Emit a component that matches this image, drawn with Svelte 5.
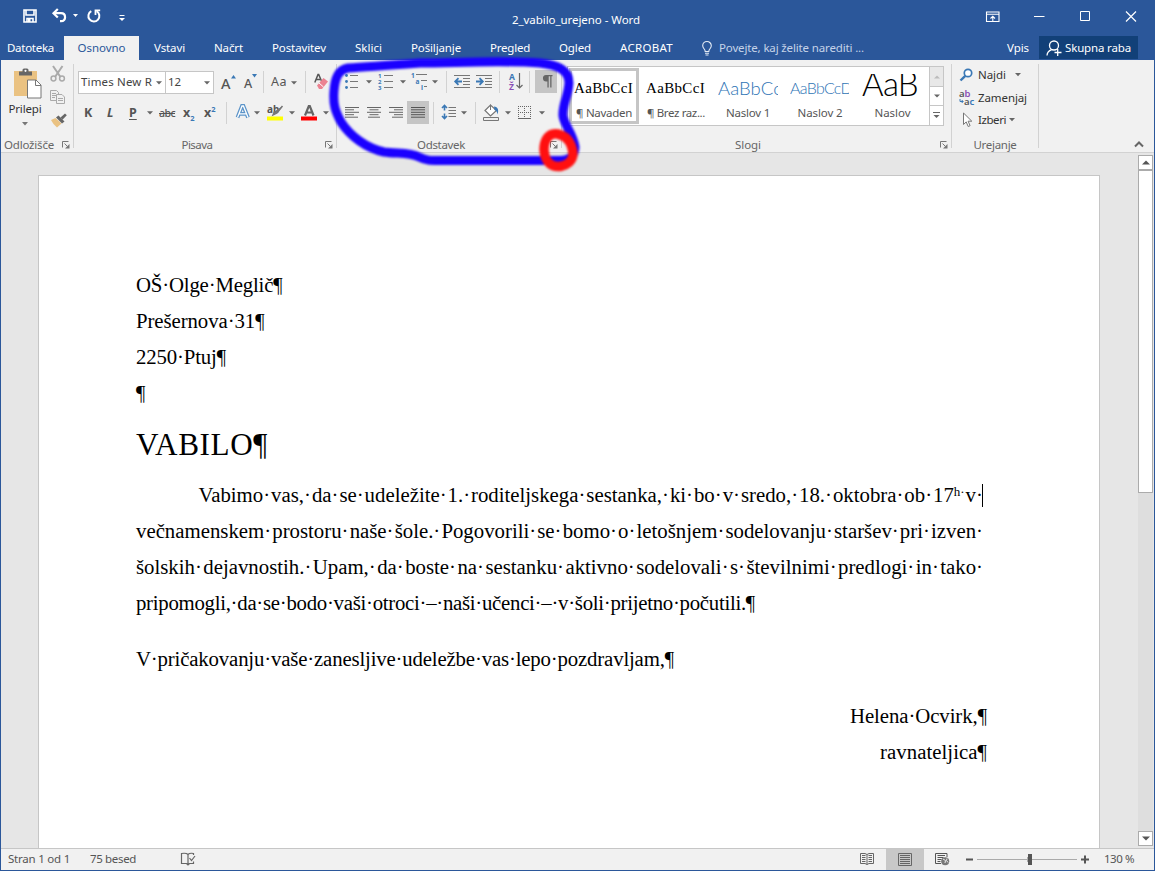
<script>
  const tabs = [
    ['Datoteka', 47], ['Osnovno', 48], ['Vstavi', 31], ['Načrt', 29], ['Postavitev', 54],
    ['Sklici', 27], ['Pošiljanje', 50], ['Pregled', 40], ['Ogled', 32], ['ACROBAT', 53]
  ];

  const styles = [
    { sample: 'AaBbCcI', label: '¶ Navaden', w: 56, sw: 59, kind: 'serif', selected: true },
    { sample: 'AaBbCcI', label: '¶ Brez raz...', w: 58, sw: 59, kind: 'serif' },
    { sample: 'AaBbCc', label: 'Naslov 1', w: 44, sw: 64, kind: 'h1' },
    { sample: 'AaBbCcD', label: 'Naslov 2', w: 45, sw: 62, kind: 'h2' },
    { sample: 'AaB', label: 'Naslov', w: 36, sw: 56, kind: 'title' }
  ];

  const address = [['OŠ·Olge·Meglič¶', 146.5], ['Prešernova·31¶', 128.5], ['2250·Ptuj¶', 90], ['¶', 0]];

  const justified = [
    'večnamenskem prostoru naše šole. Pogovorili se bomo o letošnjem sodelovanju staršev pri izven',
    'šolskih dejavnostih. Upam, da boste na sestanku aktivno sodelovali s številnimi predlogi in tako'
  ];
  const firstLine = 'Vabimo vas, da se udeležite 1. roditeljskega sestanka, ki bo v sredo, 18. oktobra ob';

  // Spreads the letters of a label so that it takes the given width.
  function fit(node, width) {
    if (!width) return;
    const apply = () => {
      node.style.letterSpacing = '0px';
      const natural = node.getBoundingClientRect().width;
      const count = [...node.textContent].length;
      node.style.letterSpacing = (width - natural) / count + 'px';
    };
    apply();
    document.fonts?.ready.then(apply);
  }
</script>

{#snippet arrow()}
  <svg class="ic" width="6" height="23"><path d="M0 10.3h6L3 13.5z" fill="#666" /></svg>
{/snippet}

{#snippet launcher()}
  <svg class="launch" width="8" height="8" viewBox="0 0 8 8"><path d="M.5 6.500V.5H6.500M2.500 2.500l3 3" fill="none" stroke="#777" /><path d="M7.500 3v4.500H3z" fill="#777" /></svg>
{/snippet}

{#snippet rule()}<i class="rule"></i>{/snippet}

{#snippet spread(text)}
  {#each text.split(' ') as word}<span>{word}·</span>{/each}
{/snippet}

<div class="window">
  <header>
    <div class="titlebar">
      <div class="quick">
        <svg width="14" height="14" viewBox="0 0 14 14"><path d="M1 1h12v12H1zM3 1v5h8V1M4 13V9.5h6V13" fill="none" stroke="#fff" stroke-width="1.6" /><path d="M5 10h2.5v3H5z" fill="#fff" /></svg>
        <svg width="15" height="14" viewBox="0 0 15 14"><path d="M2 4.2h7c5.400 0 5.400 8 .2 8H8" fill="none" stroke="#fff" stroke-width="2.200" /><path d="M5.800 0L1.500 4.200l4.300 4.300" fill="none" stroke="#fff" stroke-width="2.200" /></svg>
        <svg width="5" height="14"><path d="M0 5h5L2.500 8z" fill="#fff" /></svg>
        <svg width="14" height="14" viewBox="0 0 14 14"><path d="M4.300 2.100A5.500 5.500 0 1 0 9.600 2.200" fill="none" stroke="#fff" stroke-width="2" /><path d="M8.500 6V1.300H13.200" fill="none" stroke="#fff" stroke-width="1.800" /></svg>
        <svg width="6" height="14"><path d="M.5 6.500h5" stroke="#fff" /><path d="M0 9h6L3 12z" fill="#fff" /></svg>
      </div>
      <div class="doctitle"><span use:fit={128}>2_vabilo_urejeno - Word</span></div>
      <div class="controls">
        <svg width="14" height="12" viewBox="0 0 14 12"><path d="M.5 1h12.500v9.500H.5zM.5 3.300H13M6.800 10V5.500M4.500 7.500l2.300-2.200L9 7.500" fill="none" stroke="#fff" stroke-width="1.100" /></svg>
        <svg width="11" height="12"><path d="M0 5.500h10.500" stroke="#fff" /></svg>
        <svg width="11" height="12"><path d="M1.500 .5h9v9h-9z" fill="none" stroke="#fff" /></svg>
        <svg width="11" height="12"><path d="M0 .5l10 10M10 .5l-10 10" stroke="#fff" stroke-width="1.200" /></svg>
      </div>
    </div>
    <nav>
      {#each tabs as [name, w], i}
        <div class="tab" class:active={i === 1}><span use:fit={w}>{name}</span></div>
      {/each}
      <div class="tell">
        <svg width="10" height="15" viewBox="0 0 10 15"><path d="M3.200 10.500C3.200 8 .7 7.500.7 4.800a4.300 4.300 0 0 1 8.600 0C9.300 7.500 6.800 8 6.800 10.500zM3 12.200h4M3.500 14h3" fill="none" stroke="#e4ebf5" stroke-width="1.100" /></svg>
        <span use:fit={145}>Povejte, kaj želite narediti ...</span>
      </div>
      <div class="login"><span use:fit={22}>Vpis</span></div>
      <div class="share">
        <svg width="16" height="16" viewBox="0 0 16 16"><circle cx="8" cy="5.500" r="4.500" fill="none" stroke="#fff" stroke-width="1.300" /><path d="M1 15.500c.2-3 2-4.800 4.600-5.800M8.500 12.500h7M11.700 9v7" fill="none" stroke="#fff" stroke-width="1.300" /></svg>
        <span use:fit={66}>Skupna raba</span>
      </div>
    </nav>
  </header>

  <div class="ribbon">
    <section class="group clipboard">
      <div class="clip">
        <div class="paste">
          <svg width="30" height="32" viewBox="0 0 30 32">
            <path d="M1 3h23v25H1z" fill="#eac282" />
            <path d="M6 3.500h3.500V2a1.500 1.500 0 0 1 1.500-1.500h3A1.500 1.500 0 0 1 15.500 2v1.500H19v4H6z" fill="#666" /><circle cx="12.500" cy="2.800" r="1.100" fill="#fff" />
            <path d="M14.500 12h8.500l5 5v13H14.500z" fill="#fff" stroke="#777" /><path d="M22.500 12v5.500h5.500" fill="none" stroke="#777" />
          </svg>
          <span use:fit={33}>Prilepi</span>
          <svg width="6" height="4"><path d="M0 0h6L3 3.500z" fill="#777" /></svg>
        </div>
        <div class="clipside">
          <svg width="16" height="16" viewBox="0 0 16 16" fill="none" stroke="#aaa" stroke-width="1.500"><path d="M3 0l7.500 11M12.500 0L5 11" stroke-width="2" /><circle cx="3.500" cy="12.500" r="2.400" /><circle cx="12" cy="12.500" r="2.400" /></svg>
          <svg width="16" height="16" viewBox="0 0 16 16" fill="#f1f1f1" stroke="#aaa"><path d="M.5 1.500h6l2 2v8h-8zM2 4.500h4M2 6.500h4M2 8.500h3" /><path d="M6.500 5.500h5.500l2.500 2.500v6.500h-8zM8 9.500h5M8 11.500h5" /></svg>
          <svg width="18" height="16" viewBox="0 0 18 16"><path d="M1 8l4.500-2 6 5.500L7 15.500 3.500 12z" fill="#eac282" /><path d="M6 5.500l2.500-2 6 6-2.500 2z" fill="#666" /><path d="M10.500 5.500l4.500-4 1.800 1.800-4.300 4.500z" fill="#666" /></svg>
        </div>
      </div>
      <div class="caption"><span use:fit={50}>Odložišče</span>{@render launcher()}</div>
    </section>

    <section class="group font">
      <div class="row r1">
        <div class="combo"><span use:fit={71}>Times New R</span>{@render arrow()}</div>
        <div class="combo size"><span use:fit={13}>12</span>{@render arrow()}</div>
        <div class="glyph grow">A<svg width="5" height="4"><path d="M0 3.500L2.500 0 5 3.500z" fill="#3a78b5" /></svg></div>
        <div class="glyph shrink">A<svg width="5" height="4"><path d="M0 0h5L2.500 3.500z" fill="#3a78b5" /></svg></div>
        {@render rule()}
        <div class="glyph case"><span use:fit={16}>Aa</span></div>
        {@render arrow()}
        {@render rule()}
        <svg class="ic" width="16" height="23" viewBox="0 0 16 23"><path d="M.8 11.500L4 3.500h.7l3 7M2 8.500h4" fill="none" stroke="#555" stroke-width="1.500" /><path d="M3 14.500l6.500-7.500 4.500 3.500-6 7.500H5z" fill="#ec8291" /><path d="M5 12l4.500 4" stroke="#fff" /></svg>
      </div>
      <div class="row r2">
        <div class="glyph b">K</div>
        <div class="glyph b it">L</div>
        <div class="glyph b un">P</div>
        {@render arrow()}
        <div class="glyph strike"><span use:fit={16}>abc</span></div>
        <div class="glyph b">x<sub>2</sub></div>
        <div class="glyph b">x<sup>2</sup></div>
        {@render rule()}
        <svg class="ic" width="14" height="23" viewBox="0 0 14 23"><path d="M1.500 16.500L6 5h1.400l4.600 11.500M3.500 12.800h6.500" fill="none" stroke="#5c94c9" stroke-width="3.800" /><path d="M1.500 16.500L6 5h1.400l4.600 11.500M3.500 12.800h6.500" fill="none" stroke="#fff" stroke-width="1.300" /></svg>
        {@render arrow()}
        <svg class="ic" width="17" height="23" viewBox="0 0 17 23"><text x="0" y="12" font-size="10" font-weight="700" fill="#555">ab</text><path d="M15.500 5l-5.500 7-4 2 1.500-3.500" fill="#777" stroke="#777" stroke-width="1.500" /><path d="M0 15.500h16v4H0z" fill="#ff0" /></svg>
        {@render arrow()}
        <svg class="ic" width="17" height="23" viewBox="0 0 17 23"><path d="M4 14.500L7.800 5h1L12.500 14.500M5.300 11.500h6" fill="none" stroke="#666" stroke-width="2.200" /><path d="M0 15.500h16v4H0z" fill="red" /></svg>
        {@render arrow()}
      </div>
      <div class="caption"><span use:fit={31}>Pisava</span>{@render launcher()}</div>
    </section>

    <section class="group para">
      <div class="row r1">
        <svg class="ic" width="15" height="23"><g fill="#3a78b5"><circle cx="1.500" cy="5.500" r="1.400" /><circle cx="1.500" cy="11.500" r="1.400" /><circle cx="1.500" cy="17.500" r="1.400" /></g><path d="M5 5.500h8M5 11.500h8M5 17.500h8" stroke="#777" /></svg>
        {@render arrow()}
        <svg class="ic" width="16" height="23"><g fill="#3a78b5" font-size="6" font-weight="700"><text x="0" y="7.500">1</text><text x="0" y="13.700">2</text><text x="0" y="19.900">3</text></g><path d="M6 5.500h9M6 11.500h9M6 17.500h9" stroke="#777" /></svg>
        {@render arrow()}
        <svg class="ic" width="18" height="23"><g fill="#3a78b5" font-size="6.500" font-weight="700"><text x="0" y="7.500">1</text><text x="4.500" y="13.500">a</text><text x="10" y="19.500">i</text></g><path d="M5 4.500h11M10 10.500h6M13 16.500h3" stroke="#777" /></svg>
        {@render arrow()}
        {@render rule()}
        <svg class="ic" width="17" height="23"><path d="M0 5.500h16M9 8.500h7M9 11.500h7M9 14.500h7M0 17.500h16" stroke="#777" /><path d="M8 11.500H1.500M4.500 8.200L1.200 11.500l3.300 3.300" fill="none" stroke="#3a78b5" stroke-width="1.800" /></svg>
        <svg class="ic" width="17" height="23"><path d="M0 5.500h16M9 8.500h7M9 11.500h7M9 14.500h7M0 17.500h16" stroke="#777" /><path d="M0 11.500h6.500M3.500 8.200l3.300 3.300-3.300 3.300" fill="none" stroke="#3a78b5" stroke-width="1.800" /></svg>
        {@render rule()}
        <svg class="ic" width="16" height="23"><text x="1" y="10" font-size="8.500" font-weight="700" fill="#3a78b5">A</text><text x="1" y="19.500" font-size="8.500" font-weight="700" fill="#8a4fb5">Ž</text><path d="M11.500 3v15M8.500 15l3 3 3-3" fill="none" stroke="#666" stroke-width="1.200" /></svg>
        {@render rule()}
        <div class="pressed"><svg width="22" height="23"><path d="M11 5h6.500v1.200h-1V17.500h-1.300V6.200h-1.500V17.500h-1.300V11.500h-1A3.200 3.200 0 0 1 11 5z" fill="#666" /></svg></div>
      </div>
      <div class="row r2">
        <svg class="ic" width="15" height="22"><path d="M0 6.500h14M0 8.800h9M0 11.300h14M0 13.700h9M0 16.200h13" stroke="#666" /></svg>
        <svg class="ic" width="15" height="22"><path d="M0 6.500h14M2.500 8.800h9M0 11.300h14M2.500 13.700h9M1 16.200h12" stroke="#666" /></svg>
        <svg class="ic" width="15" height="22"><path d="M0 6.500h14M5 8.800h9M0 11.300h14M5 13.700h9M3 16.200h11" stroke="#666" /></svg>
        <div class="pressed"><svg width="22" height="22"><path d="M4 6.500h14M4 8.800h14M4 11.300h14M4 13.700h14M4 16.200h14" stroke="#555" /></svg></div>
        {@render rule()}
        <svg class="ic" width="15" height="22"><path d="M6.500 6.500h7.500M6.500 9.500h7.500M6.500 12.500h7.500M6.500 15.500h7.500" stroke="#777" /><path d="M2.500 4.500v5M2.500 12.500v5M0 7l2.500-2.500L5 7M0 15l2.500 2.500L5 15" fill="none" stroke="#3a78b5" stroke-width="1.600" /></svg>
        {@render arrow()}
        {@render rule()}
        <svg class="ic" width="17" height="22"><path d="M2 9.500L7.500 4l6 5.500-6 5.500z" fill="#fff" stroke="#777" stroke-width="1.200" /><path d="M7.500 9V3.500" stroke="#777" /><path d="M11 5.500c4 .5 5 3.500 3.500 8-.5-3-1.500-4-3-4.500z" fill="#3a78b5" /><path d="M.5 16.500h15v3H.5z" fill="#eee" stroke="#777" /></svg>
        {@render arrow()}
        <svg class="ic" width="15" height="22"><path d="M.5 5v13M6.500 5v13M12.500 5v13M0 5.500h13M0 11.500h13" fill="none" stroke="#666" stroke-dasharray="1 1" /><path d="M0 17.500h13" stroke="#666" /></svg>
        {@render arrow()}
      </div>
      <div class="caption"><span use:fit={48}>Odstavek</span>{@render launcher()}</div>
    </section>

    <section class="group styles">
      <div class="gallery">
        {#each styles as s}
          <div class="style" class:selected={s.selected}>
            <div class="sample {s.kind}"><span use:fit={s.sw}>{s.sample}</span></div>
            <div class="name"><span use:fit={s.w}>{s.label}</span></div>
          </div>
        {/each}
        <div class="pager">
          <div class="off"><svg width="6" height="4"><path d="M0 3.500L3 .5l3 3z" fill="#bbb" /></svg></div>
          <div><svg width="6" height="4"><path d="M0 .5h6l-3 3z" fill="#666" /></svg></div>
          <div><svg width="7" height="7"><path d="M0 .5h7" stroke="#666" /><path d="M.5 3h6l-3 3z" fill="#666" /></svg></div>
        </div>
      </div>
      <div class="caption"><span use:fit={26}>Slogi</span>{@render launcher()}</div>
    </section>

    <section class="group edit">
      <div class="cmds">
        <div>
          <svg width="19" height="14" viewBox="0 0 19 14"><circle cx="9" cy="5" r="3.700" fill="#fff" stroke="#3a78b5" stroke-width="1.700" /><path d="M6.300 7.800L1.500 12.500" stroke="#3a78b5" stroke-width="2.400" /></svg>
          <span use:fit={28}>Najdi</span><svg class="late" width="6" height="4"><path d="M0 0h6L3 3.300z" fill="#666" /></svg>
        </div>
        <div>
          <svg width="19" height="17" viewBox="0 0 19 17" font-size="9.500" font-weight="600"><text x="0" y="7.500" fill="#555">a<tspan fill="#8a4fb5">b</tspan></text><text x="5" y="15.500" fill="#555">a<tspan fill="#3a78b5">c</tspan></text><path d="M1 10v2.500h3M2.700 11l1.500 1.500L2.700 14" fill="none" stroke="#3a78b5" /></svg>
          <span use:fit={49}>Zamenjaj</span>
        </div>
        <div>
          <svg width="19" height="16" viewBox="0 0 19 16"><path d="M4.500 1v11.500l2.700-2.600 2 4.600 1.900-.8-2-4.500h3.700z" fill="#fff" stroke="#777" /></svg>
          <span use:fit={28}>Izberi</span><svg class="soon" width="6" height="4"><path d="M0 0h6L3 3.300z" fill="#666" /></svg>
        </div>
      </div>
      <div class="caption"><span use:fit={43}>Urejanje</span></div>
    </section>
    <div class="collapse"><svg width="10" height="7"><path d="M1 5.500l4-4 4 4" fill="none" stroke="#666" stroke-width="2" /></svg></div>
  </div>

  <main>
    <article>
      {#each address as [line, w]}<p><span use:fit={w}>{line}</span></p>{/each}
      <h1><span use:fit={132}>VABILO¶</span></h1>
      <p class="just first">{@render spread(firstLine)}<span>17<sup class="h">h·</sup></span><span>v·</span><i class="caret"></i></p>
      {#each justified as line}<p class="just">{@render spread(line)}</p>{/each}
      <p><span use:fit={619}>pripomogli,·da·se·bodo·vaši·otroci·–·naši·učenci·–·v·šoli·prijetno·počutili.¶</span></p>
      <p class="closing"><span use:fit={538}>V·pričakovanju·vaše·zanesljive·udeležbe·vas·lepo·pozdravljam,¶</span></p>
      <p class="sign"><span use:fit={137}>Helena·Ocvirk,¶</span></p>
      <p class="sign"><span use:fit={107}>ravnateljica¶</span></p>
    </article>
    <div class="scroll">
      <div class="sbtn"><svg width="8" height="5"><path d="M0 4.500L4 .5l4 4z" fill="#555" /></svg></div>
      <div class="thumb"></div>
      <div class="sbtn end"><svg width="8" height="5"><path d="M0 .5h8l-4 4z" fill="#555" /></svg></div>
    </div>
  </main>

  <footer>
    <span class="pages"><span use:fit={62}>Stran 1 od 1</span></span>
    <span class="words"><span use:fit={46}>75 besed</span></span>
    <svg class="proof" width="15" height="14" viewBox="0 0 15 14"><path d="M7 12.500V2.500C5.500 1 3.500 1 .5 1.500v10h5L7 13l1.500-1.500h4v-2M7 2.500C8.500 1 10 1 12.500 1.500v1.500M8.500 6l2 2.500L14 4" fill="none" stroke="#666" stroke-width="1.200" /></svg>
    <div class="views">
      <div><svg width="14" height="14" viewBox="0 0 14 14"><path d="M.5 1.500H5l2 1 2-1h4.500v10H9l-2 1-2-1H.5zM7 2.500v10M2 3.500h3.500M2 5.500h3.500M2 7.500h3.500M2 9.500h3.500M8.500 3.500H12M8.500 5.500H12M8.500 7.500H12M8.500 9.500H12" fill="none" stroke="#666" /></svg></div>
      <div class="on"><svg width="14" height="13"><path d="M.5.5h13v12H.5zM2 2.500h10M2 4.500h10M2 6.500h10M2 8.500h10M2 10.500h10" fill="none" stroke="#666" /></svg></div>
      <div><svg width="15" height="14" viewBox="0 0 15 14"><path d="M6 11.500H.5V1.500h11.500v3.500M2.500 3.500h7.500M2.500 5.500h6M2.500 7.500h4M2.500 9.500h3" fill="none" stroke="#555" /><circle cx="10.200" cy="9.200" r="4" fill="#777" /><path d="M8 7l2.500 1.500-.5 2.500M12 6.500l-.5 2 1.500 2" fill="none" stroke="#eee" /></svg></div>
    </div>
    <svg class="zoom" width="124" height="14"><path d="M0 7.500h7M115 7.500h8M119 3.500v8" stroke="#555" stroke-width="2" /><path d="M11 7.500h100M61.500 5v5" stroke="#aaa" /><path d="M62 2h4v11h-4z" fill="#555" /></svg>
    <span class="pct"><span use:fit={30}>130 %</span></span>
  </footer>

  <svg class="ink" width="260" height="125" viewBox="325 52 260 125" fill="none" stroke-linecap="round" stroke-linejoin="round">
    <path d="M348 68C338 70 335 78 334 91S335 111 341 122C350 136 366 148 384 152C397 154 409 152 419 157C427 161 431 160.500 444 160.500H559C568 161 575 157 575 147C573 133 564 125 563 116C562 105 568 97 569 83C569 70 558 65 540 63C502 60 454 63 420 63C393 65 366 67 348 68Z" stroke="#1a00ff" stroke-width="9" />
    <path d="M558 134C548 132 544 141 544 150C545 163 552 168 562 166C573 163 575 155 571 145C568 138 564 135 557 134Z" stroke="#ff1010" stroke-width="9.500" />
  </svg>
</div>

<style>
  :global(body) { background: #e6e6e6; }
  .window {
    position: relative; box-sizing: border-box; width: 1155px; height: 871px;
    display: flex; flex-direction: column; overflow: hidden;
    font: 11.5px/16px "Noto Sans", "Open Sans", sans-serif; color: #444;
    background: #e6e6e6; border: solid #2b579a; border-width: 0 1px 1px;
  }
  span { white-space: pre; display: inline-block; flex: none; }
  svg { display: block; flex: none; overflow: visible; }
  svg text { font-family: "Noto Sans", sans-serif; }
  header { height: 60px; background: #2b579a; color: #fff; flex: none; margin: 0 -1px; }
  .titlebar { height: 36px; display: grid; grid-template-columns: 420px 312px 1fr; align-items: center; }
  .quick { display: grid; grid-template-columns: 29px 21px 14px 32px auto; padding: 0 0 4px 23px; }
  .doctitle { display: flex; justify-content: center; padding-top: 3px; }
  .controls { display: grid; grid-template-columns: 48px 45px 47px 11px; justify-content: end; padding: 0 18px 3px 0; }
  nav { height: 24px; display: grid; grid-template-columns: 64px 75px 61px 57px 84px 55px 80px 68px 62px 81px 1fr auto 99px; margin-right: 17px; align-items: stretch; }
  .tab { display: flex; justify-content: center; align-items: center; }
  .tab:first-child { padding-right: 3px; }
  .tab.active { background: #f1f1f1; color: #2b579a; }
  .tell { display: flex; align-items: center; gap: 7px; padding-left: 15px; color: #c5d3e8; }
  .login { display: flex; align-items: center; padding-right: 10px; }
  .share { display: flex; align-items: center; gap: 3px; padding-left: 7px; background: #124078; height: 23px; }

  .ribbon { height: 92px; flex: none; display: flex; background: #f1f1f1; border-bottom: 1px solid #d2d2d2; }
  .group { box-sizing: border-box; display: flex; flex-direction: column; border-right: 1px solid #d2d2d2; margin: 4px 0 4px; position: relative; }
  .clipboard { width: 73px; }
  .font { width: 263px; }
  .para { width: 225px; }
  .styles { width: 390px; }
  .edit { width: 87px; }
  .caption { margin: auto 0 -5px; height: 16px; display: flex; justify-content: center; align-items: center; color: #666; padding-right: 17px; }
  .caption .launch { position: absolute; right: 3px; bottom: -1px; }
  .edit .caption { padding-right: 0; }
  .font .caption { padding-right: 16px; }
  .clipboard .caption { padding-right: 16px; }
  .para .caption { padding-right: 16px; }

  .clip { display: flex; height: 66px; }
  .paste { width: 48px; display: flex; flex-direction: column; align-items: center; padding-top: 4px; color: #333; }
  .paste svg:first-child { margin-left: 6px; }
  .paste span { margin: 1px 0 5px; }
  .clipside { display: flex; flex-direction: column; gap: 7px; padding: 2px 0 0 1px; }

  .row { display: grid; justify-items: start; align-items: center; height: 23px; margin-top: 8px; }
  .r1 { margin-top: 6px; }
  .font .row { padding-left: 4px; }
  .font .r1 { grid-template-columns: 87px 56px 23px 19px 8px 20px 14px 9px 16px; }
  .font .r2 { padding-left: 10px; grid-template-columns: 23px 22px 18px 12px 24px 21px 22px 10px 18px 13px 22px 12px 22px 6px; }
  .para .row { padding-left: 8px; }
  .para .r1 { grid-template-columns: 21px 12px 22px 11px 21px 14px 8px 22px 23px 9px 21px 6px 23px; }
  .para .r2 { grid-template-columns: 22px 22px 18px 26px 9px 19px 14px 8px 22px 13px 21px 6px; }
  .ic { height: 23px; }
  .rule { width: 1px; height: 22px; background: #d2d2d2; }
  .pressed { background: #c5c5c5; height: 23px; width: 22px; }
  .combo { box-sizing: border-box; width: 88px; height: 23px; display: flex; align-items: center; justify-content: space-between; background: #fff; border: 1px solid #c6c6c6; padding: 0 3px 0 2px; }
  .combo.size { width: 49px; }
  .glyph { color: #555; line-height: 20px; white-space: nowrap; }
  .grow, .shrink { display: flex; font-size: 14.5px; font-weight: 500; gap: 0; padding-top: 2px; }
  .shrink { font-size: 12.5px; padding-top: 4px; }
  .grow svg, .shrink svg { margin-top: 2px; }
  .shrink svg { margin-top: 0; }
  .case { font-size: 12.5px; }
  .b { font-weight: 700; font-size: 12.5px; }
  .it { font-style: italic; }
  .un { text-decoration: underline; text-underline-offset: 2px; }
  .strike { font-size: 10.5px; font-weight: 500; }
  .strike span { text-decoration: line-through; }
  .b sub, .b sup { font-size: 7.5px; color: #3a78b5; line-height: 0; }

  .gallery { height: 60px; box-sizing: border-box; margin: 2px 7px 0 5px; display: grid; grid-template-columns: repeat(4, 72px) 73px 1fr; border: 1px solid #c6c6c6; background: #fff; }
  .style { box-sizing: border-box; padding: 4px 6px 0; overflow: hidden; }
  .style.selected { outline: 3px solid #c5c5c5; outline-offset: -4px; }
  .sample { height: 33px; line-height: 34px; overflow: hidden; display: flex; width: 60px; }
  .serif { font-family: "Liberation Serif", serif; font-size: 15px; color: #000; }
  .h1, .h2, .title { font-family: Lato, sans-serif; font-weight: 300; color: #2e74b5; }
  .h1 { font-size: 18.500px; }
  .h2 { font-size: 16px; width: 59px; }
  .title { font-size: 33px; color: #000; line-height: 19px; margin-top: 3px; height: 30px; }
  .name { display: flex; justify-content: center; line-height: 18px; margin: 0 -6px; color: #555; }
  .pager { display: grid; grid-template-rows: 20px 19px 19px; border-left: 1px solid #c6c6c6; }
  .pager div { display: flex; align-items: center; justify-content: center; border-bottom: 1px solid #c6c6c6; }
  .pager div:last-child { border: 0; }
  .pager .off { background: #e8e8e8; }

  .cmds { display: grid; grid-template-rows: 23px 23px 22px; padding-left: 7px; margin-top: -1px; color: #333; }
  .cmds div { display: flex; align-items: center; }
  .cmds .late { margin-left: 9px; }
  .cmds .soon { margin-left: 3px; }
  .collapse { flex: 1; display: flex; justify-content: flex-end; align-items: flex-end; padding: 0 10px 4px 0; }

  main { flex: 1; display: flex; justify-content: space-between; min-height: 0; }
  article { box-sizing: border-box; width: 1062px; margin: 22px 0 0 37px; padding: 91px 121px 0 97px; border: 1px solid #c6c6c6; border-bottom: 0; background: #fff; color: #000; font: 20.8px/36px "Liberation Serif", serif; }
  p, h1 { margin: 0; height: 36px; display: flex; }
  h1 { font-size: 31.200px; font-weight: 400; line-height: 54px; height: 54px; margin: 7px 0 5px; }
  .just { justify-content: space-between; width: 847px; box-sizing: border-box; }
  .first { padding-left: 62.500px; position: relative; }
  .h { font-size: 13px; line-height: 0; vertical-align: 6px; }
  .caret { position: absolute; right: 0; top: 7px; width: 1px; height: 23px; background: #000; }
  .closing { margin-top: 20px; }
  .sign { justify-content: flex-end; margin-right: -9px; }
  .closing + .sign { margin-top: 21px; }
  .scroll { width: 15px; display: flex; flex-direction: column; background: #dedede; margin: 2px 1px 2px 0; }
  .sbtn, .thumb { box-sizing: border-box; border: 1px solid #ababab; background: #fff; }
  .sbtn { height: 15px; display: flex; align-items: center; justify-content: center; }
  .thumb { height: 323px; }
  .end { margin-top: auto; }

  footer { height: 21px; flex: none; display: flex; align-items: center; background: #f1f1f1; border-top: 1px solid #c6c6c6; color: #555; }
  .pages { margin: 0 0 1px 7px; }
  .words { margin: 0 0 2px 20px; }
  .proof { margin: 0 0 2px 45px; }
  .views { margin-left: auto; display: flex; height: 21px; }
  .views div { box-sizing: border-box; width: 38px; display: flex; align-items: center; justify-content: center; padding: 0 1px 1px 0; }
  .views .on { background: #c8c8c8; }
  .zoom { margin: 0 0 1px 4px; }
  .pct { margin: 0 20px 2px 14px; }
  .ink { position: absolute; left: 324px; top: 52px; filter: blur(0.8px); pointer-events: none; }
</style>
